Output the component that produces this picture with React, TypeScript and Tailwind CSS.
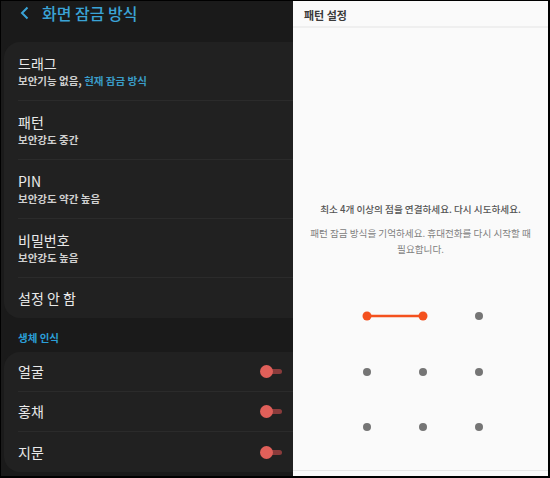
import React from "react";

const font = { fontFamily: '"Noto Sans CJK KR", "Noto Sans", sans-serif' };

function Row({ title, sub, last }: { title: string; sub?: React.ReactNode; last?: boolean }) {
  return (
    <div className={`${sub ? "h-[59px]" : "h-[40px]"} ml-[14px] flex flex-col justify-center ${last ? "" : "border-b border-[#2b2b2b]"}`}>
      <div className="text-[14px] leading-[18px] text-[#e9e9e9]">{title}</div>
      {sub && <div className="text-[10.5px] leading-[15px] font-bold text-[#d0d0d0] mt-[1px]">{sub}</div>}
    </div>
  );
}

function ToggleRow({ title, last }: { title: string; last?: boolean }) {
  return (
    <div className={`h-[40px] ml-[14px] flex items-center justify-between ${last ? "" : "border-b border-[#2b2b2b]"}`}>
      <span className="text-[14px] text-[#e9e9e9]">{title}</span>
      <div className="relative w-[22px] h-[12px] mr-[11px] flex items-center">
        <div className="absolute left-[6px] right-0 h-[5px] rounded-full bg-[#8a3b3b]" />
        <div className="absolute left-0 w-[13px] h-[13px] rounded-full bg-[#e0605a]" />
      </div>
    </div>
  );
}

export default function App() {
  const cols = [367, 423, 479];
  const rows = [317, 373, 428];
  return (
    <div className="w-[550px] h-[478px] bg-black p-[1px] pr-[2px] pb-[2px] flex" style={font}>
      <div className="w-[292px] h-full bg-[#1a1a1a] flex flex-col overflow-hidden">
        <div className="h-[41px] shrink-0 flex items-start pt-[1px] pl-[19px]">
          <svg width="9" height="14" viewBox="0 0 9 14" className="mt-[4px] mr-[13px]">
            <polyline points="7.5,1.5 2,7 7.5,12.5" fill="none" stroke="#3aa3d6" strokeWidth="2" />
          </svg>
          <span className="text-[#3aa3d6] text-[16px] leading-[22px] font-medium">화면 잠금 방식</span>
        </div>
        <div className="shrink-0 ml-[3px] -mr-[20px] bg-[#212121] rounded-[16px]">
          <Row title="드래그" sub={<>보안기능 없음, <span className="text-[#3a9cc8]">현재 잠금 방식</span></>} />
          <Row title="패턴" sub="보안강도 중간" />
          <Row title="PIN" sub="보안강도 약간 높음" />
          <Row title="비밀번호" sub="보안강도 높음" />
          <Row title="설정 안 함" last />
        </div>
        <div className="h-[34px] shrink-0 flex items-center pl-[17px] pt-[6px]">
          <span className="text-[10.5px] font-bold text-[#2b9fd8]">생체 인식</span>
        </div>
        <div className="shrink-0 ml-[3px] bg-[#212121] rounded-tl-[16px] rounded-bl-[16px]">
          <ToggleRow title="얼굴" />
          <ToggleRow title="홍채" />
          <ToggleRow title="지문" last />
        </div>
      </div>
      <div className="flex-1 h-full bg-[#fafafa] flex flex-col">
        <div className="h-[27px] shrink-0 border-b-2 border-[#efefef] pl-[11px]">
          <span className="text-[11px] leading-[22px] font-bold text-[#3a3a3a]">패턴 설정</span>
        </div>
        <div className="flex-1 relative border-b border-[#e6e6e6] mb-[5px]">
          <div className="absolute left-0 right-0 top-[174px] text-center text-[9.6px] leading-[14px] text-[#555] font-medium">
            최소 4개 이상의 점을 연결하세요. 다시 시도하세요.
          </div>
          <div className="absolute left-[4px] right-[4px] top-[197px] text-center text-[9.6px] leading-[16px] text-[#808080]">
            패턴 잠금 방식을 기억하세요. 휴대전화를 다시 시작할 때
            <br />
            필요합니다.
          </div>
          <svg className="absolute left-0 top-0" width="254" height="440" viewBox="293 29 254 440">
            <line x1={cols[0]} y1={rows[0]} x2={cols[1]} y2={rows[0]} stroke="#f4511e" strokeWidth="2.5" />
            {rows.map((y, ri) =>
              cols.map((x, ci) => {
                const on = ri === 0 && ci < 2;
                return <circle key={`${ri}-${ci}`} cx={x} cy={y} r={on ? 4.5 : 4} fill={on ? "#f4511e" : "#757575"} />;
              })
            )}
          </svg>
        </div>
      </div>
    </div>
  );
}
